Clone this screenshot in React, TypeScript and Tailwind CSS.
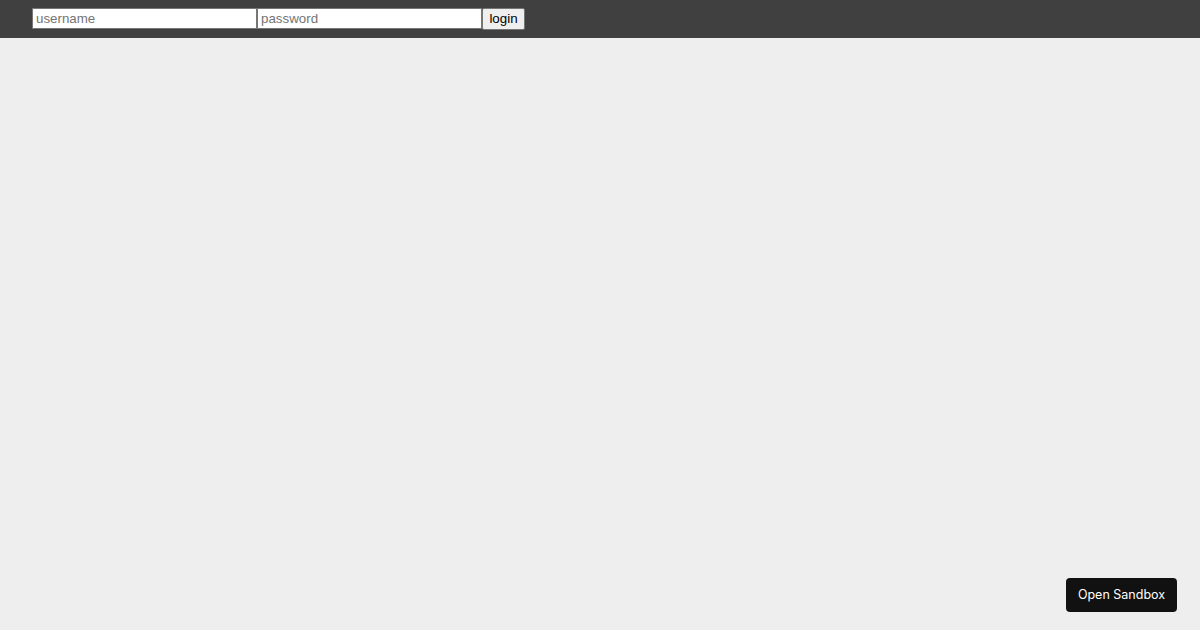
import React from "react";

export default function App() {
  return (
    <div className="min-h-[630px] w-full bg-[#eeeeee] font-['Liberation_Sans',Arial,sans-serif]">
      <div className="flex h-[38px] items-start bg-[#404040] pl-[32px] pt-[8px]">
        <input
          type="text"
          placeholder="username"
          className="box-border h-[21px] w-[225px] border border-[#767676] bg-white px-[3px] pb-[1px] text-[13.33px] text-black placeholder:text-[#757575] outline-none"
        />
        <input
          type="password"
          placeholder="password"
          className="box-border h-[21px] w-[225px] border border-[#767676] bg-white px-[3px] pb-[1px] text-[13.33px] text-black placeholder:text-[#757575] outline-none"
        />
        <button className="box-border h-[22px] w-[43px] rounded-[2px] border border-[#767676] bg-[#efefef] text-[13.33px] text-black">
          login
        </button>
      </div>

      <button className="fixed bottom-[18px] right-[23px] h-[34px] w-[111px] rounded-[4px] bg-[#111111] text-[12.5px] text-white font-['Inter',sans-serif]">
        Open Sandbox
      </button>
    </div>
  );
}
